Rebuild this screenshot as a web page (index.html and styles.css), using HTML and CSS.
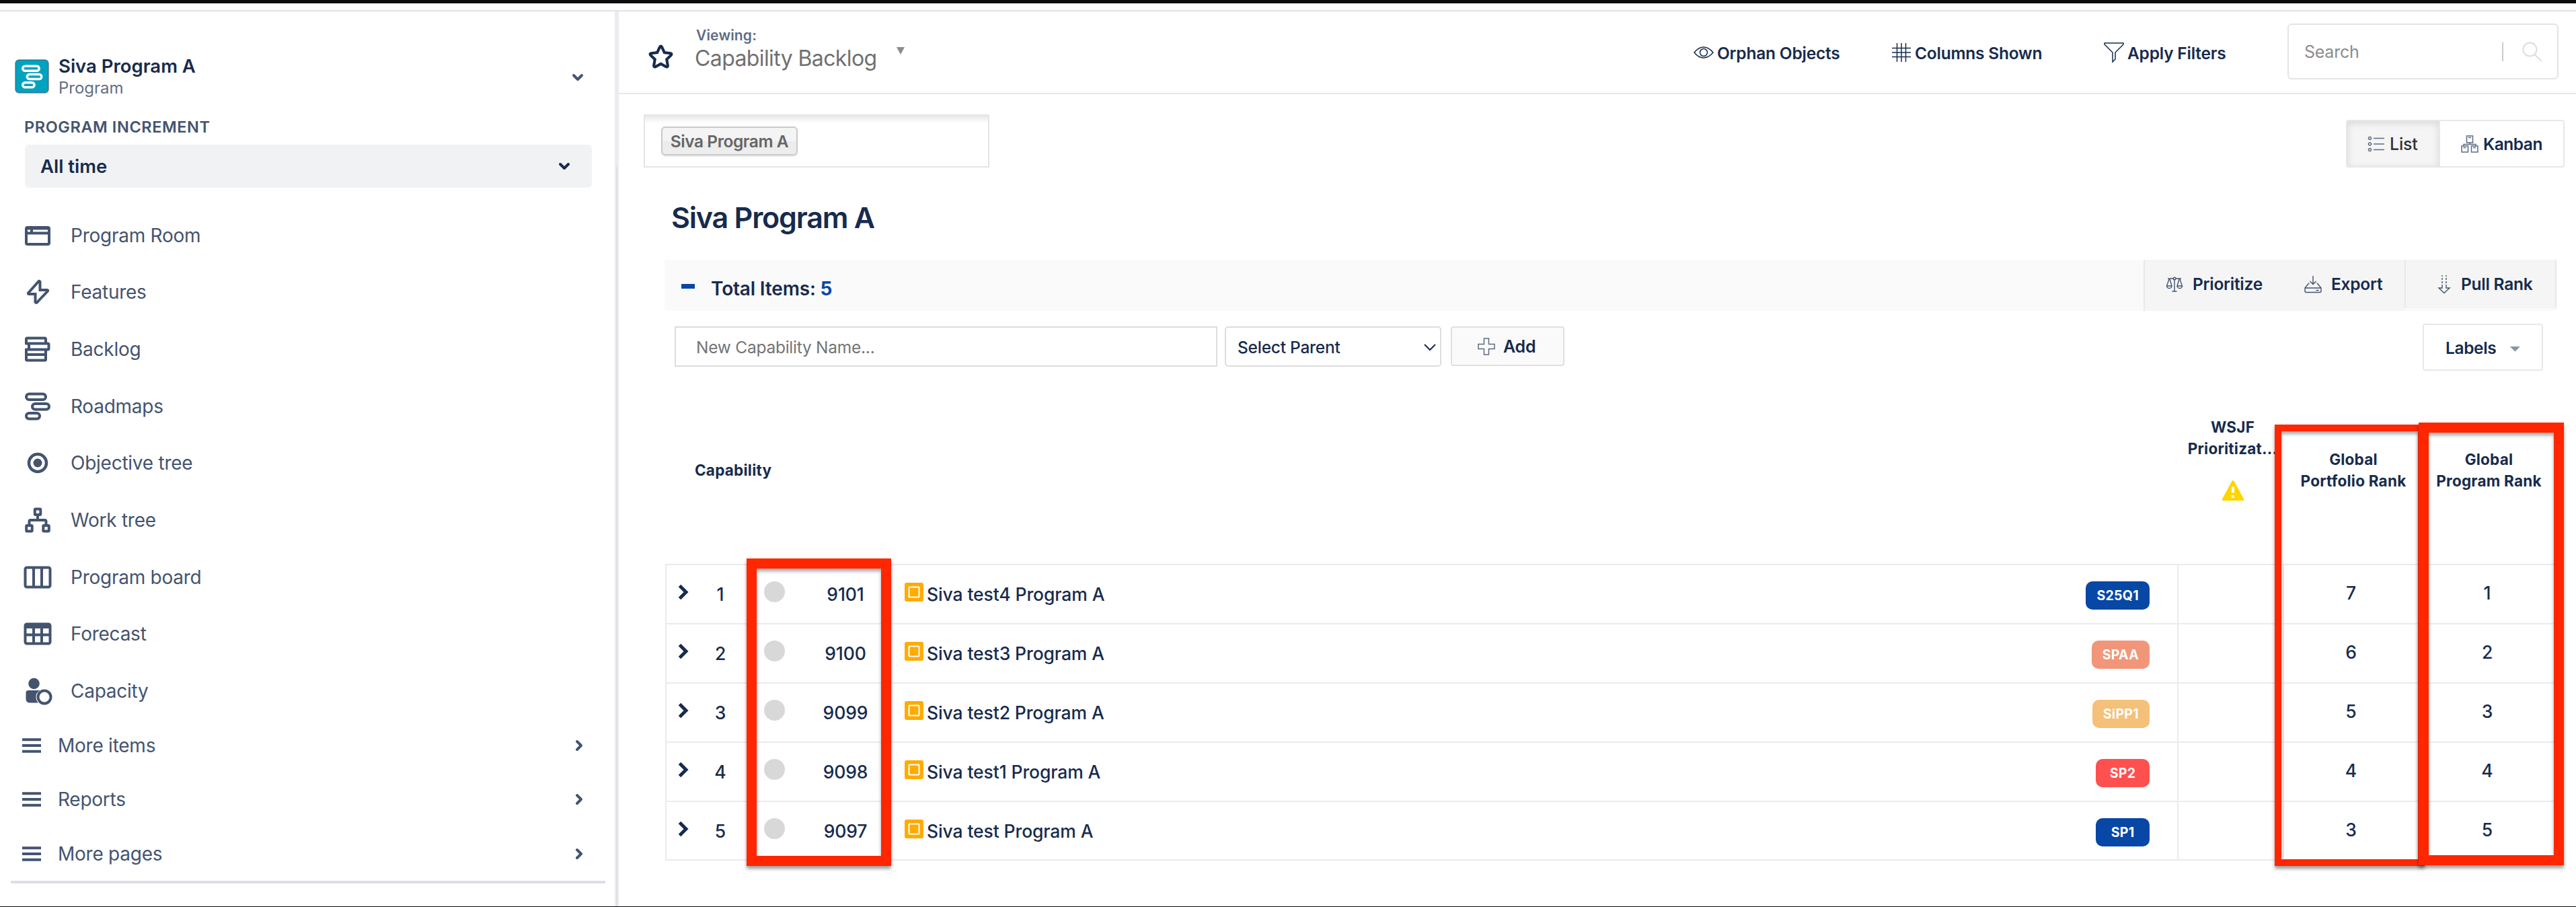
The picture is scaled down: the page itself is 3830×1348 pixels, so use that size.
FILE: index.html
```
<!DOCTYPE html>
<html lang="en">
    <head>
        <meta charset="utf-8">
        <title>Capability Backlog</title>
        <link rel="stylesheet" href="styles.css">
    </head>
    <body>
        <svg class="defs">
            <symbol id="chev-down" viewBox="0 0 18 12"><path d="M3 3l6 6 6-6"/></symbol>
            <symbol id="chev-right" viewBox="0 0 12 18"><path d="M3 3l6 6-6 6"/></symbol>
            <symbol id="menu" viewBox="0 0 28 22"><path d="M0 2.2h28M0 11h28M0 19.8h28"/></symbol>
            <symbol id="expand" viewBox="0 0 16 24"><path d="M2.500 2.500L12 12l-9.500 9.500"/></symbol>
            <symbol id="cap" viewBox="0 0 28 28">
                <rect width="28" height="28" rx="3" fill="#ffab00"/>
                <rect x="6.500" y="6.500" width="15" height="15" rx="1" fill="none" stroke="#fff" stroke-width="2"/>
            </symbol>
        </svg>

        <div class="top_strip"></div>
        <div class="app">
            <!-- sidebar -->
            <div class="sidebar">
                <div class="program">
                    <svg class="logo" viewBox="0 0 48 48"><rect width="48" height="48" rx="5" fill="#00a3bf"/><g fill="none" stroke="#fff" stroke-width="3.400"><rect x="10.500" y="9" width="24" height="7" rx="3.500"/><rect x="17" y="21" width="21" height="7" rx="3.500"/><rect x="10.500" y="33" width="17" height="7" rx="3.500"/></g></svg>
                    <div class="program_txt">
                        <div class="program_name">Siva Program A</div>
                        <div class="program_type">Program</div>
                    </div>
                    <svg class="chev program_chev"><use href="#chev-down"/></svg>
                </div>
                <div class="pi_label">PROGRAM INCREMENT</div>
                <div class="pi_select"><span>All time</span><svg class="chev"><use href="#chev-down"/></svg></div>

                <div class="nav">
                    <a class="nav_item"><svg viewBox="0 0 42 42"><rect x="4" y="9" width="34" height="25" rx="2"/><path d="M4 17.500h34M12 9v8" /><path d="M4 10.500h34"/></svg>Program Room</a>
                    <a class="nav_item"><svg viewBox="0 0 42 42"><path d="M22.500 5L7 22.500q-.5 1.500 1 1.500h9.500v12q1.500 2 3 0L36 19.500q.5-1.500-1-1.500H24.500V6q-.8-1.800-2-1z"/></svg>Features</a>
                    <a class="nav_item"><svg viewBox="0 0 42 42"><path d="M4 13.500V6q0-1.500 1.500-1.500h26Q33 4.500 33 6v6.500M2.500 12.500H36q1.500 0 1.500 1.500v6q0 1.500-1.500 1.500H3M8 12.500v9M4 20v16q0 1.500 1.500 1.500h26q1.500 0 1.500-1.500V21.500M4 29h29"/></svg>Backlog</a>
                    <a class="nav_item"><svg viewBox="0 0 42 42"><rect x="4" y="2.500" width="29" height="8.500" rx="4.250"/><rect x="13" y="17" width="25" height="8.500" rx="4.250"/><rect x="4" y="31" width="20" height="8.500" rx="4.250"/></svg>Roadmaps</a>
                    <a class="nav_item"><svg viewBox="0 0 42 42"><circle cx="21" cy="21" r="13" stroke-width="4.500"/><circle cx="21" cy="21" r="6.500" fill="#44546f" stroke="none"/></svg>Objective tree</a>
                    <a class="nav_item"><svg viewBox="0 0 42 42"><rect x="16.800" y="4.500" width="8.500" height="8.500" rx="1"/><rect x="4.200" y="29" width="8.500" height="8.500" rx="1"/><rect x="29.300" y="29" width="8.500" height="8.500" rx="1"/><path d="M21 13v8M8.500 29v-6q0-2 2-2h21q2 0 2 2v6"/></svg>Work tree</a>
                    <a class="nav_item"><svg viewBox="0 0 42 42"><rect x="2.500" y="6.500" width="37" height="29" rx="2.500"/><path d="M15 6.500v29M27 6.500v29"/></svg>Program board</a>
                    <a class="nav_item"><svg viewBox="0 0 42 42"><rect x="2.500" y="6.500" width="37" height="29" rx="2.500"/><path d="M15 10v25M27 10v25M2.500 22.500h37M2.500 9.500h37" /><path d="M3 11h36"/></svg>Forecast</a>
                    <a class="nav_item"><svg viewBox="0 0 42 42"><circle cx="15.500" cy="10" r="8.300" fill="#44546f" stroke="none"/><path d="M3.500 23.500q0-3.500 4-3.500h17q-6.500 4-6 10 .2 5.500 3.500 8.500H9q-5.500-.5-5.500-6z" fill="#44546f" stroke="none"/><circle cx="31" cy="30" r="9.500"/></svg>Capacity</a>
                </div>
                <div class="more">
                    <a class="more_item"><svg class="menu"><use href="#menu"/></svg>More items<svg class="chev_r"><use href="#chev-right"/></svg></a>
                    <a class="more_item"><svg class="menu"><use href="#menu"/></svg>Reports<svg class="chev_r"><use href="#chev-right"/></svg></a>
                    <a class="more_item"><svg class="menu"><use href="#menu"/></svg>More pages<svg class="chev_r"><use href="#chev-right"/></svg></a>
                </div>
                <div class="side_rule"></div>
            </div>

            <!-- main area -->
            <div class="main">
                <div class="header">
                    <svg class="star" viewBox="0 0 36 36"><path d="M18 2.500q1 0 1.500 1.200l3.700 8 8.800 1.200q2.500.6.900 2.600l-6.400 6.200 1.600 8.900q0 2.500-2.200 1.800L18 28.100l-7.900 4.300q-2.200.7-2.200-1.800l1.600-8.900-6.400-6.200q-1.600-2 .9-2.600l8.800-1.200 3.700-8Q17 2.500 18 2.500z"/></svg>
                    <div class="viewing">
                        <div class="viewing_label">Viewing:</div>
                        <div class="viewing_name">Capability Backlog</div>
                    </div>
                    <div class="tri"></div>
                    <div class="actions">
                        <a class="action orphan"><svg viewBox="0 0 30 30"><path d="M1 15Q7.500 7 15 7t14 8q-6.500 8-14 8T1 15z"/><circle cx="15" cy="15" r="5.500"/></svg>Orphan Objects</a>
                        <a class="action columns"><svg viewBox="0 0 30 30"><path d="M8.500 1v28M15 1v28M21.500 1v28M1 8.500h28M1 15h28M1 21.500h28"/></svg>Columns Shown</a>
                        <a class="action filters"><svg viewBox="0 0 30 30"><path d="M1 1h28v2L17 15v10l-4 4V15L1 3z"/></svg>Apply Filters</a>
                    </div>
                    <div class="search">
                        <span>Search</span>
                        <i></i>
                        <svg viewBox="0 0 30 30"><circle cx="11.500" cy="11.500" r="10"/><path d="M18.500 19L29 29"/></svg>
                    </div>
                </div>

                <div class="filter_row">
                    <div class="filter_box"><span class="tag">Siva Program A</span></div>
                    <div class="views">
                        <a class="view list"><svg viewBox="0 0 26 26"><circle cx="3.500" cy="4.500" r="2"/><circle cx="3.500" cy="13" r="2"/><circle cx="3.500" cy="21.500" r="2"/><path d="M9 4.500h16M9 13h16M9 21.500h16"/></svg>List</a>
                        <a class="view kanban"><svg viewBox="0 0 26 26"><rect x="8.500" y="1" width="9" height="10"/><rect x="1" y="16" width="9.500" height="9"/><rect x="15.500" y="16" width="9.500" height="9"/><path d="M13 11v2.500M4 16v-2.500h18V16M11 3.500h4M3.500 18.500h4M18 18.500h4"/></svg>Kanban</a>
                    </div>
                </div>

                <h1 class="title">Siva Program A</h1>

                <div class="total_bar">
                    <i class="dash"></i>
                    <div class="total">Total Items: <b>5</b></div>
                    <div class="tools">
                        <a class="tool prioritize"><svg viewBox="0 0 26 26"><path d="M3 5h8M15 5h8M13 7v17M9.500 24h7M5 6L1.500 16h7.500L6 6M20 6l-3 10h7.500L21 6M1.500 16q.5 3.500 3.800 3.500T9 16M17 16q.5 3.500 3.800 3.500t3.700-3.500"/><circle cx="13" cy="5" r="1.800"/></svg>Prioritize</a>
                        <a class="tool export"><svg viewBox="0 0 26 26"><path d="M13 1v12M8.500 9l4.500 4.500L17.500 9M7.500 12q-1 0-2 1.500L1 19v4.500q0 2 2 2h20q2 0 2-2V19l-4.500-5.500q-1-1.500-2-1.500M1.500 19h23M17.500 22.500h4"/></svg>Export</a>
                    </div>
                    <a class="tool pull"><svg viewBox="0 0 20 28"><path d="M7 1v2M13 1v2M7 5v3M13 5v3M7 10v3M13 10v3M7 15v5H2l8 7.500 8-7.500h-5v-5"/></svg>Pull Rank</a>
                </div>

                <div class="form_row">
                    <div class="name_input">New Capability Name...</div>
                    <div class="parent_select"><span>Select Parent</span><svg viewBox="0 0 18 10"><path d="M1 1l8 8 8-8"/></svg></div>
                    <a class="add"><svg viewBox="0 0 26 26"><path d="M9.500 1h7v8.500H25v7h-8.500V25h-7v-8.500H1v-7h8.500z"/></svg>Add</a>
                    <a class="labels">Labels<i></i></a>
                </div>

                <div class="thead">
                    <div class="th_cap">Capability</div>
                    <div class="th_wsjf">WSJF<br>Prioritizat...
                        <svg viewBox="0 0 34 32"><path d="M17 1q1.200 0 1.800 1.200L33 28.500q.8 2.500-1.500 2.500h-29Q.2 31 1 28.500L15.200 2.200Q15.800 1 17 1z" fill="#ffd500"/><path d="M17 10v9.500M17 23v4" stroke="#fff" stroke-width="4"/></svg>
                    </div>
                    <div class="th_rank">Global<br>Portfolio Rank</div>
                    <div class="th_rank">Global<br>Program Rank</div>
                </div>

                <div class="rows">
                    <div class="row">
                        <div class="c"><svg class="exp"><use href="#expand"/></svg></div>
                        <div class="c">1</div>
                        <div class="c"><i class="dot"></i></div>
                        <div class="c">9101</div>
                        <div class="name"><svg><use href="#cap"/></svg>Siva test4 Program A</div>
                        <div class="pi"><span class="badge blue">S25Q1</span></div>
                        <div class="c line"></div>
                        <div class="c line rank">7</div>
                        <div class="c rank">1</div>
                    </div>
                    <div class="row">
                        <div class="c"><svg class="exp"><use href="#expand"/></svg></div>
                        <div class="c">2</div>
                        <div class="c"><i class="dot"></i></div>
                        <div class="c">9100</div>
                        <div class="name"><svg><use href="#cap"/></svg>Siva test3 Program A</div>
                        <div class="pi"><span class="badge salmon">SPAA</span></div>
                        <div class="c line"></div>
                        <div class="c line rank">6</div>
                        <div class="c rank">2</div>
                    </div>
                    <div class="row">
                        <div class="c"><svg class="exp"><use href="#expand"/></svg></div>
                        <div class="c">3</div>
                        <div class="c"><i class="dot"></i></div>
                        <div class="c">9099</div>
                        <div class="name"><svg><use href="#cap"/></svg>Siva test2 Program A</div>
                        <div class="pi"><span class="badge sand">SiPP1</span></div>
                        <div class="c line"></div>
                        <div class="c line rank">5</div>
                        <div class="c rank">3</div>
                    </div>
                    <div class="row">
                        <div class="c"><svg class="exp"><use href="#expand"/></svg></div>
                        <div class="c">4</div>
                        <div class="c"><i class="dot"></i></div>
                        <div class="c">9098</div>
                        <div class="name"><svg><use href="#cap"/></svg>Siva test1 Program A</div>
                        <div class="pi"><span class="badge red">SP2</span></div>
                        <div class="c line"></div>
                        <div class="c line rank">4</div>
                        <div class="c rank">4</div>
                    </div>
                    <div class="row">
                        <div class="c"><svg class="exp"><use href="#expand"/></svg></div>
                        <div class="c">5</div>
                        <div class="c"><i class="dot"></i></div>
                        <div class="c">9097</div>
                        <div class="name"><svg><use href="#cap"/></svg>Siva test Program A</div>
                        <div class="pi"><span class="badge blue">SP1</span></div>
                        <div class="c line"></div>
                        <div class="c line rank">3</div>
                        <div class="c rank">5</div>
                    </div>
                </div>
            </div>
        </div>

        <!-- highlight frames over the table -->
        <div class="frame frame_ids"></div>
        <div class="frame frame_portfolio"></div>
        <div class="frame frame_program"></div>
    </body>
</html>
```
FILE: styles.css
```
* {
    box-sizing: border-box;
}
body {
    margin: 0;
    position: relative;
    width: 3830px;
    height: 1348px;
    overflow: hidden;
    background: #fff;
    border-bottom: 1px solid #0d0d0d;
    font-family: Inter, "Liberation Sans", sans-serif;
    font-size: 25px;
    font-weight: 500;
    letter-spacing: -0.01em;
    color: #172b4d;
    white-space: nowrap;
}
svg {
    display: block;
    flex: none;
    fill: none;
    stroke: currentColor;
    overflow: visible;
}
.defs {
    position: absolute;
    width: 0;
    height: 0;
}
symbol {
    overflow: visible;
}
#cap {
    stroke: none;
}
.top_strip {
    height: 17px;
    border-top: 5px solid #0d0d0d;
    border-bottom: 2px solid #dfe3e8;
}
.app {
    display: flex;
    height: 1330px;
}

/* sidebar */
.sidebar {
    position: relative;
    width: 920px;
    border-right: 6px solid #ebecf0;
    color: #44546f;
}
.sidebar::after {
    content: "";
    position: absolute;
    top: 231px;
    bottom: 0;
    right: -4px;
    width: 2px;
    background: #dcdfe4;
}
.program {
    display: flex;
    padding: 63px 46px 0 23px;
    height: 146px;
}
.logo {
    width: 49px;
    height: 49px;
    margin-top: 9px;
}
.program_txt {
    margin-left: 15px;
    flex: 1;
}
.program_name {
    font-size: 27.500px;
    font-weight: 600;
    line-height: 36px;
    color: #172b4d;
    letter-spacing: 0;
}
.program_type {
    font-size: 24px;
    line-height: 30px;
    font-weight: 400;
    color: #626f86;
    letter-spacing: 0;
}
.chev {
    width: 18px;
    height: 12px;
    stroke-width: 4;
    stroke-linecap: round;
    stroke-linejoin: round;
}
.program_chev {
    margin-top: 29px;
}
.pi_label {
    padding-left: 36px;
    font-size: 23.500px;
    font-weight: 600;
    line-height: 32px;
    height: 52px;
    padding-top: 10px;
    letter-spacing: 0.025em;
}
.pi_select {
    display: flex;
    align-items: center;
    justify-content: space-between;
    width: 843px;
    height: 64px;
    margin-left: 37px;
    padding: 0 32px 0 23px;
    border-radius: 6px;
    background: #f1f2f4;
    color: #172b4d;
    font-size: 27.500px;
    font-weight: 600;
    letter-spacing: 0;
}
.nav {
    padding-top: 28.500px;
}
.nav_item {
    display: flex;
    align-items: center;
    height: 84.650px;
    padding-left: 35px;
    font-size: 28px;
    font-weight: 400;
}
.nav_item svg {
    width: 42px;
    height: 42px;
    margin-right: 28px;
    stroke-width: 4;
}
.more {
    margin-top: -2px;
}
.more_item {
    display: flex;
    align-items: center;
    height: 80.700px;
    padding: 0 47px 0 33px;
    font-size: 28px;
    font-weight: 400;
}
.menu {
    width: 28px;
    height: 22px;
    margin-right: 25px;
    stroke-width: 4;
}
.chev_r {
    width: 12px;
    height: 18px;
    margin-left: auto;
    stroke-width: 4;
    stroke-linecap: round;
    stroke-linejoin: round;
}
.side_rule {
    width: 884px;
    height: 4px;
    margin-left: 16px;
    background: #dcdfe4;
}

/* header */
.main {
    width: 2910px;
}
.header {
    display: flex;
    height: 123px;
    border-bottom: 2px solid #e8e8e8;
    padding-left: 44px;
}
.star {
    width: 37px;
    height: 37px;
    margin-top: 49px;
    stroke-width: 4;
}
.viewing {
    width: 298px;
    padding: 23px 0 0 32px;
}
.viewing_label {
    padding-left: 2px;
    font-size: 21px;
    font-weight: 600;
    line-height: 26px;
    letter-spacing: 0.008em;
    color: #5e6c84;
}
.viewing_name {
    font-size: 32px;
    font-weight: 400;
    line-height: 41px;
    letter-spacing: -0.019em;
    color: #707070;
}
.tri {
    margin: 53px 0 0 34px;
    width: 12px;
    height: 11px;
    background: #8c8c8c;
    clip-path: polygon(0 0, 100% 0, 50% 100%);
}
.actions {
    display: flex;
    margin-left: auto;
    height: 124px;
    padding-top: 44px;
}
.action {
    display: flex;
    align-items: center;
    height: 36px;
    font-size: 24.500px;
    font-weight: 600;
    letter-spacing: -0.009em;
}
.action svg {
    width: 30px;
    height: 30px;
    margin: -2px 5px 0 0;
    stroke-width: 1.500;
}
.orphan {
    width: 294px;
}
.columns {
    width: 316px;
}
.filters {
    width: 273px;
}
.search {
    display: flex;
    align-items: center;
    width: 403px;
    height: 83px;
    margin: 18px 26px 0 0;
    padding: 0 22px 0 23px;
    border: 2px solid #e4e4e4;
    border-radius: 6px;
    color: #8c8c8c;
    font-size: 25px;
    font-weight: 400;
}
.search i {
    width: 2px;
    height: 28px;
    margin: 0 28px 0 auto;
    background: #ccc;
}
.search svg {
    width: 30px;
    height: 30px;
    stroke: #ddd;
    stroke-width: 2;
}

/* program filter and view switch */
.filter_row {
    display: flex;
    justify-content: space-between;
    align-items: flex-start;
    height: 117px;
    padding: 30px 17px 0 37px;
}
.filter_box {
    width: 514px;
    height: 79px;
    padding: 16px 0 0 24px;
    border: 2px solid #e5e5e5;
    box-shadow: inset 0 12px 10px -8px rgba(0,0,0,0.12);
}
.tag {
    display: block;
    width: 203px;
    height: 43px;
    border: 2px solid #c9c9c9;
    border-radius: 6px;
    background: linear-gradient(#f4f4f4 50%, #ebebeb 51%, #eee);
    box-shadow: 0 2px 1px rgba(0,0,0,0.08);
    color: #666;
    font-size: 24.500px;
    font-weight: 600;
    letter-spacing: -0.018em;
    line-height: 40px;
    text-align: center;
}
.views {
    display: flex;
    margin-top: 8px;
}
.view {
    display: flex;
    align-items: center;
    height: 71px;
    border: 2px solid #e8e8e8;
    font-size: 25px;
}
.view svg {
    width: 26px;
    height: 26px;
    margin-right: 7px;
    stroke: #5e6c84;
    stroke-width: 1.500;
}
.list {
    width: 140px;
    padding-left: 30px;
    color: #333;
    background: #f5f5f5;
    border-radius: 4px 0 0 4px;
    box-shadow: inset 0 3px 12px rgba(0,0,0,0.12);
}
.kanban {
    width: 185px;
    padding-left: 31px;
    border-left: 0;
    border-radius: 0 4px 4px 0;
    font-size: 24.500px;
    font-weight: 600;
    letter-spacing: -0.02em;
}
.title {
    height: 129px;
    margin: 0;
    padding: 36px 0 0 78px;
    font-size: 43px;
    font-weight: 600;
    line-height: 60px;
    letter-spacing: -0.028em;
}

/* total bar */
.total_bar {
    display: flex;
    width: 2813px;
    height: 76px;
    margin-left: 68px;
    background: #fafafa;
}
.dash {
    width: 20px;
    height: 7px;
    margin: 36px 24px 0 25px;
    background: #0747a6;
}
.total {
    line-height: 87px;
    font-size: 28px;
    font-weight: 600;
    letter-spacing: -0.006em;
}
.total b {
    color: #0747a6;
    font-weight: 700;
}
.tools {
    display: flex;
    width: 388px;
    margin-left: auto;
    background: #f5f5f5;
    border-left: 2px solid #e8e8e8;
}
.tool {
    display: flex;
    align-items: center;
    height: 72px;
    color: #172b4d;
    font-size: 24.500px;
    font-weight: 600;
}
.tool svg {
    width: 26px;
    height: 26px;
    margin-right: 14px;
    stroke: #44546f;
    stroke-width: 1.400;
}
.prioritize {
    width: 237px;
    padding-left: 31px;
}
.tool.pull {
    width: 226px;
    padding-left: 47px;
    background: #f5f5f5;
    border-left: 2px solid #e8e8e8;
    border-right: 2px solid #e8e8e8;
}
.tool.pull svg {
    width: 20px;
    height: 28px;
    margin-right: 15px;
}

/* new capability form */
.form_row {
    display: flex;
    align-items: flex-start;
    height: 89px;
    padding: 23px 49px 0 83px;
}
.name_input {
    width: 807px;
    height: 60px;
    padding-left: 30px;
    border: 2px solid #ddd;
    color: #757575;
    font-weight: 400;
    font-size: 24.500px;
    line-height: 58px;
}
.parent_select {
    display: flex;
    align-items: center;
    justify-content: space-between;
    width: 322px;
    height: 60px;
    margin-left: 11px;
    padding: 1px 6px 0 17px;
    border: 2px solid #ddd;
    border-radius: 5px;
    font-size: 24.500px;
}
.parent_select svg {
    width: 18px;
    height: 10px;
    stroke-width: 2;
}
.add {
    display: flex;
    align-items: center;
    width: 169px;
    height: 59px;
    margin-left: 14px;
    padding: 1px 0 0 38px;
    border: 2px solid #e0e0e0;
    border-radius: 4px;
    background: #fafafa;
    font-weight: 600;
    font-size: 25px;
}
.add svg {
    width: 26px;
    height: 26px;
    margin-right: 12px;
    stroke: #5e6c84;
    stroke-width: 1.500;
}
.labels {
    display: flex;
    align-items: center;
    width: 179px;
    height: 70px;
    margin: -4px 0 0 auto;
    padding: 1px 0 0 32px;
    border: 2px solid #e8e8e8;
    border-radius: 4px;
    font-size: 24.500px;
    font-weight: 600;
    letter-spacing: -0.015em;
}
.labels i {
    width: 16px;
    height: 8px;
    margin: 4px 0 0 20px;
    background: #8993a4;
    clip-path: polygon(0 0, 100% 0, 50% 100%);
}

/* table */
.thead {
    display: grid;
    grid-template-columns: 1fr 165px 196px 200px;
    width: 2812px;
    height: 287px;
    margin-left: 69px;
    font-size: 22.500px;
    font-weight: 700;
    line-height: 32px;
    letter-spacing: 0.01em;
}
.th_cap {
    padding: 132px 0 0 44px;
}
.th_wsjf {
    padding: 68px 6px 0 0;
    display: flex;
    flex-direction: column;
    align-items: center;
    width: 165px;
    text-align: center;
}
.th_wsjf svg {
    width: 34px;
    height: 32px;
    margin-top: 30px;
    stroke: none;
}
.th_rank {
    padding-top: 116px;
    margin-left: -8px;
    text-align: center;
}
.th_rank + .th_rank {
    margin-left: -1px;
}
.rows {
    width: 2812px;
    margin-left: 69px;
    border-left: 2px solid #ebebeb;
    border-bottom: 2px solid #ebebeb;
    font-size: 26.500px;
    letter-spacing: -0.004em;
}
.row {
    display: grid;
    grid-template-columns: 50px 60px 101px 110px 1fr 200px 157px 204px 203px;
    height: 87.900px;
    border-top: 2px solid #ebebeb;
}
.row > div {
    display: flex;
    align-items: center;
    padding-top: 1px;
}
.row > .c {
    justify-content: center;
}
.row > .line {
    border-left: 2px solid #ebebeb;
}
.row > .rank {
    padding: 0 3px 3px 0;
}
.exp {
    width: 16px;
    height: 24px;
    margin-bottom: 7px;
    stroke-width: 5;
}
.dot {
    width: 31px;
    height: 31px;
    margin-bottom: 7px;
    border-radius: 50%;
    background: #d8d8d8;
}
.row > .name {
    padding-left: 33px;
}
.name svg {
    width: 28px;
    height: 28px;
    margin: 0 5px 6px 0;
}
.row > .pi {
    justify-content: flex-end;
    padding: 4px 41px 0 0;
}
.badge {
    min-width: 80px;
    height: 42px;
    padding: 0 16px;
    border-radius: 10px;
    color: #fff;
    font-size: 19.500px;
    font-weight: 700;
    line-height: 42px;
    letter-spacing: 0.015em;
    text-align: center;
}
.blue {
    background: #0747a6;
}
.salmon {
    background: #f2967a;
}
.sand {
    background: #f4c07a;
}
.red {
    background: #ff5050;
}

/* highlight frames */
.frame {
    position: absolute;
    border: 15px solid #ff2600;
    box-shadow: 0 4px 5px rgba(0,0,0,0.4), inset 0 4px 5px rgba(0,0,0,0.35);
}
.frame_ids {
    left: 1110px;
    top: 830px;
    width: 215px;
    height: 457px;
}
.frame_portfolio {
    left: 3382px;
    top: 631px;
    width: 223px;
    height: 656px;
    border-width: 10px;
}
.frame_program {
    left: 3596px;
    top: 628px;
    width: 216px;
    height: 658px;
}
```
